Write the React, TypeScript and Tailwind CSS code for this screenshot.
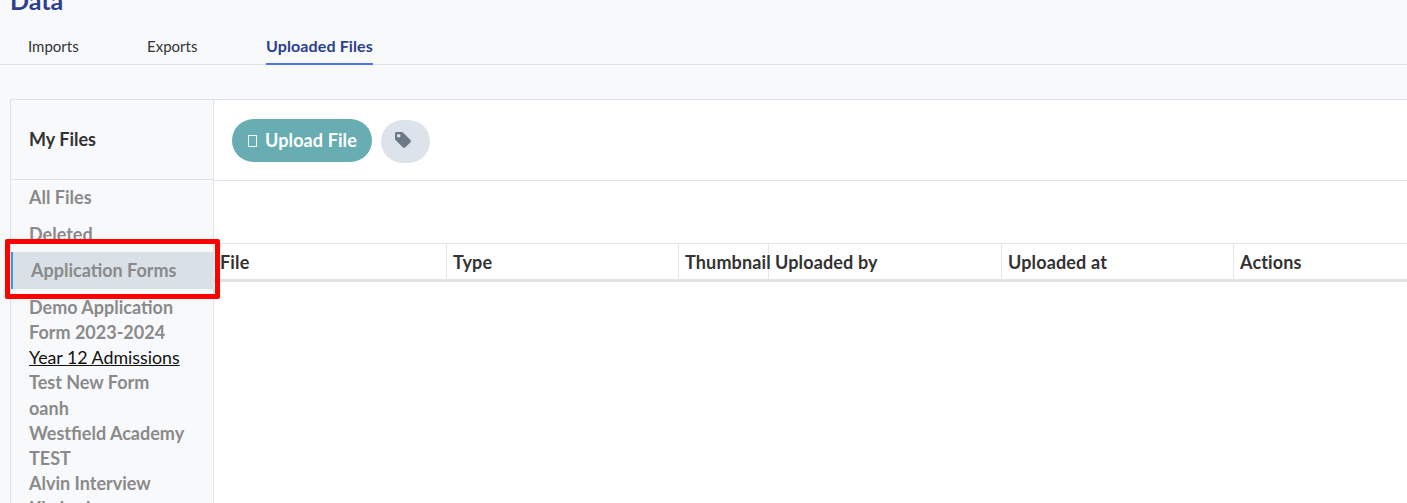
import React from "react";

const font = { fontFamily: '"Lato", "Liberation Sans", sans-serif' };

const forms: { label: string; link?: boolean }[] = [
  { label: "Demo Application Form 2023-2024" },
  { label: "Year 12 Admissions", link: true },
  { label: "Test New Form" },
  { label: "oanh" },
  { label: "Westfield Academy" },
  { label: "TEST" },
  { label: "Alvin Interview" },
  { label: "Khzhzsk" },
];

const cols = [
  { label: "File", w: "w-[233px]" },
  { label: "Type", w: "w-[232px]" },
  { label: "Thumbnail", w: "w-[90px]" },
  { label: "Uploaded by", w: "w-[233px]" },
  { label: "Uploaded at", w: "w-[232px]" },
  { label: "Actions", w: "flex-1" },
];

export default function App() {
  return (
    <div
      className="relative h-[503px] w-[1407px] overflow-hidden bg-[#f8f9fb] text-[15px] text-[#333333]"
      style={font}
    >
      <div className="flex h-[65px] flex-col border-b border-[#dfe3e8]">
        <h1 className="-mt-[14px] h-[34px] shrink-0 pl-[10px] text-[25px] font-bold leading-[28px] text-[#2c3e8f]">
          Data
        </h1>
        <nav className="flex h-[44px] shrink-0 items-end pl-[28px]">
          <a className="flex h-[37px] w-[119px] items-start pt-[9px] leading-[20px]">Imports</a>
          <a className="flex h-[37px] w-[119px] items-start pt-[9px] leading-[20px]">Exports</a>
          <a className="relative z-10 -mb-px h-[38px] whitespace-nowrap border-b-2 border-[#4f74f0] pt-[9px] text-[16px] font-bold leading-[20px] tracking-[0.12px] text-[#2c3e8f]">
            Uploaded Files
          </a>
        </nav>
      </div>

      <div className="ml-[10px] mt-[34px] flex h-[500px] border-l border-t border-[#dfe3e8]">
        <aside className="w-[203px] shrink-0 border-r border-[#dfe3e8] text-[18px] font-bold text-[#8a8a8a]">
          <div className="flex h-[80px] items-center border-b border-[#dfe3e8] pl-[18px] text-[#333333]">
            My Files
          </div>
          <div className="flex h-[36px] items-center pb-[2px] pl-[18px]">All Files</div>
          <div className="flex h-[36px] items-center pl-[18px] pt-[1px]">Deleted</div>
          <div className="flex h-[37px] items-center border-l-2 border-[#2a9fe0] bg-[#d9e1e6] pb-[2px] pl-[18px] leading-none">
            Application Forms
          </div>
          <ul className="pl-[18px] pr-[20px] pt-[6px] leading-[25.15px]">
            {forms.map((f) => (
              <li key={f.label}>
                {f.link ? (
                  <span className="text-[17.8px] font-normal text-[#111111] underline">{f.label}</span>
                ) : (
                  f.label
                )}
              </li>
            ))}
          </ul>
        </aside>

        <main className="flex-1 bg-white">
          <div className="flex h-[81px] items-start gap-[9px] border-b border-[#dfe3e8] pl-[18px] pt-[19px]">
            <button className="flex h-[43px] w-[140px] items-center justify-center gap-[8px] rounded-full bg-[#67adb1] pl-px text-[18px] font-bold tracking-[0.1px] text-white">
              <span className="h-[12px] w-[9px] border border-white/90" />
              Upload File
            </button>
            <button className="mt-px flex h-[43px] w-[49px] items-start rounded-full bg-[#dce3ea] pl-[14px] pt-[12px]">
              <svg width="16" height="16" viewBox="0 0 16 16" fill="#6c7a87" aria-hidden="true">
                <path d="M0 1.6C0 .7.7 0 1.6 0h5.2c.5 0 .9.2 1.2.5l7.5 7.5c.6.6.6 1.6 0 2.2l-5.3 5.3c-.6.6-1.6.6-2.2 0L.5 8C.2 7.7 0 7.3 0 6.8V1.6zm3.7 3.9a1.8 1.8 0 1 0 0-3.6 1.8 1.8 0 0 0 0 3.6z" fillRule="evenodd" />
              </svg>
            </button>
          </div>
          <div className="mt-[62px] flex h-[39px] border-b-[3px] border-t border-b-[#dfe2e8] border-t-[#e4e6ea] text-[18px] font-bold tracking-[0.15px] text-[#333333]">
            {cols.map((c, i) => (
              <div
                key={c.label}
                className={`${c.w} flex items-center whitespace-nowrap pl-[6px] pt-[2px] ${i < cols.length - 1 ? "border-r border-[#e4e6ea]" : ""}`}
              >
                {c.label}
              </div>
            ))}
          </div>
        </main>
      </div>

      <div className="pointer-events-none absolute left-[5px] top-[239px] h-[60px] w-[215px] rounded-[2px] border-[5px] border-[#ff0000]" />
    </div>
  );
}
